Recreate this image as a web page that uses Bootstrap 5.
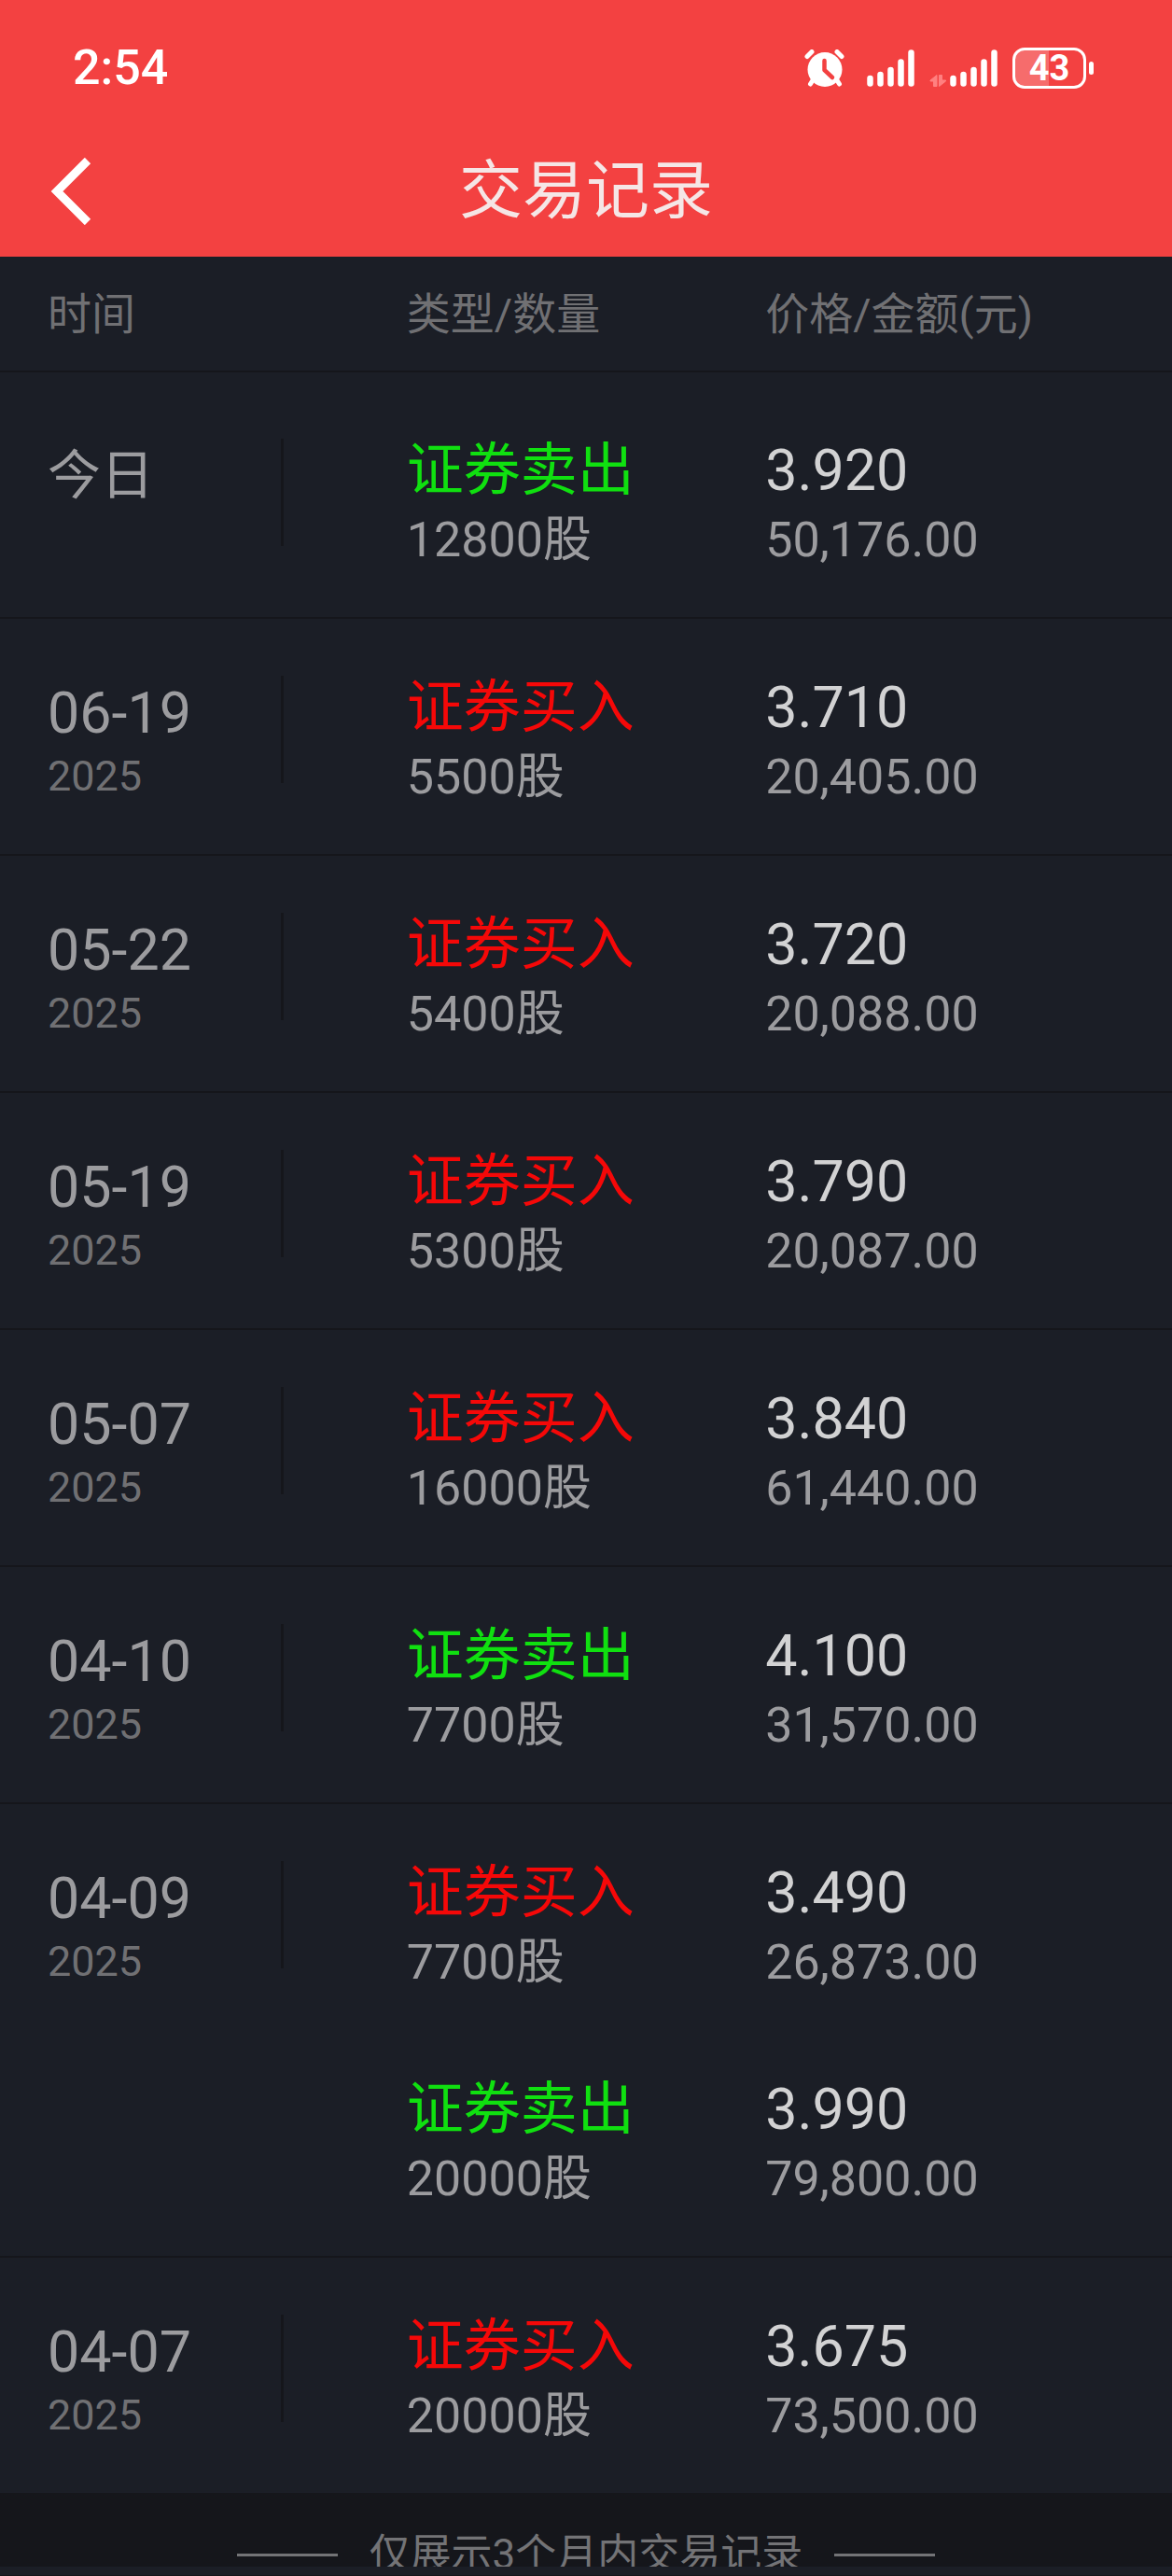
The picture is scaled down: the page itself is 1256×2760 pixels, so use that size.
<!DOCTYPE html>
<html lang="zh-CN">
<head>
<meta charset="utf-8">
<meta name="viewport" content="width=device-width, initial-scale=1">
<title>交易记录</title>
<link href="https://cdn.jsdelivr.net/npm/bootstrap@5.3.0/dist/css/bootstrap.min.css" rel="stylesheet">
<style>
  :root { --panel: #1b1e26; --deep: #15161b; --brand: #f34141; }
  body { background: var(--panel); font-family: Roboto, "Noto Sans CJK SC", sans-serif; }
  .app-top { background: var(--brand); color: #fff; }
  .status-bar { height: 133px; padding: 13px 84px 0 78px; }
  .clock { font-size: 52px; line-height: 60px; font-weight: 500; }
  .battery { width: 79px; height: 44px; border: 3px solid #fff; border-radius: 13px; font-size: 38px; line-height: 38px; font-weight: 700;
    background: linear-gradient(to right, #f66c6c 50%, transparent 50%); }
  .battery-tip { width: 5px; height: 14px; border-radius: 3px; background: #fff; margin-left: 3px; }
  .nav-row { height: 142px; padding: 2px 51px 0; }
  .nav-title { font-size: 68px; line-height: 80px; font-weight: 400; color: #f5e6e6; }
  .scroller { min-height: 0; overflow-y: auto; scrollbar-width: none; background: var(--deep); }
  .scroller::-webkit-scrollbar { display: none; }

  .trades { table-layout: fixed; border-collapse: separate; border-spacing: 0; background: var(--panel); }
  .trades th, .trades td { padding: 60px 0 42px; border: 0 solid var(--deep); border-bottom-width: 2px; vertical-align: top; text-align: left; font-weight: 400; }
  .trades .col-date { width: 34.7%; padding-left: 51px; padding-right: 132px; }
  .trades .col-type { width: 30.6%; }
  .trades thead th { padding-top: 32px; padding-bottom: 30px; font-size: 47px; line-height: 60px; color: #707073; }
  .trades .first-day > * { padding-top: 70px; }
  .trades .same-day > td { border-bottom-width: 0; padding-bottom: 22px; }
  .date-box { height: 115px; margin-top: 1px; border-right: 3px solid var(--deep); padding-top: 5px; }
  .day { font-size: 61px; line-height: 70px; color: #9c9c9f; }
  .today { font-size: 57px; }
  .year { font-size: 45px; line-height: 66px; color: #707073; }
  .kind, .price { font-size: 61px; line-height: 70px; }
  .price { color: #d2d2d3; }
  .qty { font-size: 52px; line-height: 80px; color: #9c9c9f; }
  .sell { color: #10e010; }
  .buy { color: #f50808; }

  .note { padding: 34px 0; gap: 34px; font-size: 44px; line-height: 60px; color: #737376; }
  .note-rule { width: 108px; height: 3px; background: #737376; }
  .home-strip { height: 10px; background: var(--panel); border-bottom: 1px solid var(--deep); }
</style>
</head>
<body>
<div class="vh-100 d-flex flex-column overflow-hidden">
  <header class="app-top flex-shrink-0">
    <div class="status-bar d-flex align-items-center justify-content-between">
      <span class="clock">2:54</span>
      <div class="d-flex align-items-center">
        <svg class="me-4" width="43" height="40" viewBox="0 0 43 40" fill="none" stroke="#fff" stroke-linecap="round" aria-label="闹钟">
          <circle cx="22" cy="21.500" r="18.500" fill="#fff" stroke="none"/>
          <path d="M3 7.500 8 2.500M40 7.500 35 2.500" stroke-width="5"/>
          <path d="M9 33 6.500 37M35 33 37.500 37" stroke-width="5"/>
          <path d="M21.500 12V22L30 30" stroke="#f34141" stroke-width="4.500" stroke-linejoin="round"/>
        </svg>
        <svg class="me-3" width="51" height="40" viewBox="0 0 51 40" stroke="#fff" stroke-width="6.500" stroke-linecap="round" aria-label="信号">
          <path d="M3.500 31V36.500M14.500 27V36.500M25.500 22V36.500M36.500 13.500V36.500M47.500 3.500V36.500"/>
        </svg>
        <svg class="me-1" width="18" height="40" viewBox="0 0 18 40" fill="#ff8080" stroke="#ff8080" stroke-width="1" stroke-linejoin="round" aria-hidden="true">
          <path d="M8 27.500V39.500H4.500V34H1V33Z"/><path d="M10.500 39.500V27.500H13.500V33H17.500V34Z"/>
        </svg>
        <svg class="me-3" width="51" height="40" viewBox="0 0 51 40" stroke="#fff" stroke-width="6.500" stroke-linecap="round" aria-label="信号">
          <path d="M3.500 31V36.500M14.500 27V36.500M25.500 22V36.500M36.500 13.500V36.500M47.500 3.500V36.500"/>
        </svg>
        <span class="battery text-center">43</span><span class="battery-tip"></span>
      </div>
    </div>
    <nav class="nav-row d-flex align-items-center" aria-label="页面导航">
      <div class="col d-flex">
        <button type="button" class="btn p-0 border-0 d-flex" aria-label="返回">
          <svg width="50" height="72" viewBox="0 0 50 72" fill="none" stroke="#fff" stroke-width="9"><path d="M43 3 10 36 43 69"/></svg>
        </button>
      </div>
      <h1 class="nav-title m-0">交易记录</h1>
      <div class="col"></div>
    </nav>
  </header>

  <main class="scroller flex-grow-1">
    <table class="trades w-100">
      <thead>
        <tr><th class="col-date" scope="col">时间</th><th class="col-type" scope="col">类型/数量</th><th scope="col">价格/金额(元)</th></tr>
      </thead>
      <tbody>
        <tr class="first-day">
          <th class="col-date" scope="row"><div class="date-box"><div class="day today">今日</div></div></th>
          <td><div class="kind sell">证券卖出</div><div class="qty">12800股</div></td>
          <td><div class="price">3.920</div><div class="qty">50,176.00</div></td>
        </tr>
        <tr>
          <th class="col-date" scope="row"><div class="date-box"><div class="day">06-19</div><div class="year">2025</div></div></th>
          <td><div class="kind buy">证券买入</div><div class="qty">5500股</div></td>
          <td><div class="price">3.710</div><div class="qty">20,405.00</div></td>
        </tr>
        <tr>
          <th class="col-date" scope="row"><div class="date-box"><div class="day">05-22</div><div class="year">2025</div></div></th>
          <td><div class="kind buy">证券买入</div><div class="qty">5400股</div></td>
          <td><div class="price">3.720</div><div class="qty">20,088.00</div></td>
        </tr>
        <tr>
          <th class="col-date" scope="row"><div class="date-box"><div class="day">05-19</div><div class="year">2025</div></div></th>
          <td><div class="kind buy">证券买入</div><div class="qty">5300股</div></td>
          <td><div class="price">3.790</div><div class="qty">20,087.00</div></td>
        </tr>
        <tr>
          <th class="col-date" scope="row"><div class="date-box"><div class="day">05-07</div><div class="year">2025</div></div></th>
          <td><div class="kind buy">证券买入</div><div class="qty">16000股</div></td>
          <td><div class="price">3.840</div><div class="qty">61,440.00</div></td>
        </tr>
        <tr>
          <th class="col-date" scope="row"><div class="date-box"><div class="day">04-10</div><div class="year">2025</div></div></th>
          <td><div class="kind sell">证券卖出</div><div class="qty">7700股</div></td>
          <td><div class="price">4.100</div><div class="qty">31,570.00</div></td>
        </tr>
        <tr class="same-day">
          <th class="col-date" scope="rowgroup" rowspan="2"><div class="date-box"><div class="day">04-09</div><div class="year">2025</div></div></th>
          <td><div class="kind buy">证券买入</div><div class="qty">7700股</div></td>
          <td><div class="price">3.490</div><div class="qty">26,873.00</div></td>
        </tr>
        <tr>
          <td><div class="kind sell">证券卖出</div><div class="qty">20000股</div></td>
          <td><div class="price">3.990</div><div class="qty">79,800.00</div></td>
        </tr>
        <tr>
          <th class="col-date" scope="row"><div class="date-box"><div class="day">04-07</div><div class="year">2025</div></div></th>
          <td><div class="kind buy">证券买入</div><div class="qty">20000股</div></td>
          <td><div class="price">3.675</div><div class="qty">73,500.00</div></td>
        </tr>
      </tbody>
    </table>
    <div class="note d-flex align-items-center justify-content-center">
      <span class="note-rule"></span><span>仅展示3个月内交易记录</span><span class="note-rule"></span>
    </div>
  </main>
  <div class="home-strip flex-shrink-0"></div>
</div>
<script src="https://cdn.jsdelivr.net/npm/bootstrap@5.3.0/dist/js/bootstrap.bundle.min.js"></script>
</body>
</html>
